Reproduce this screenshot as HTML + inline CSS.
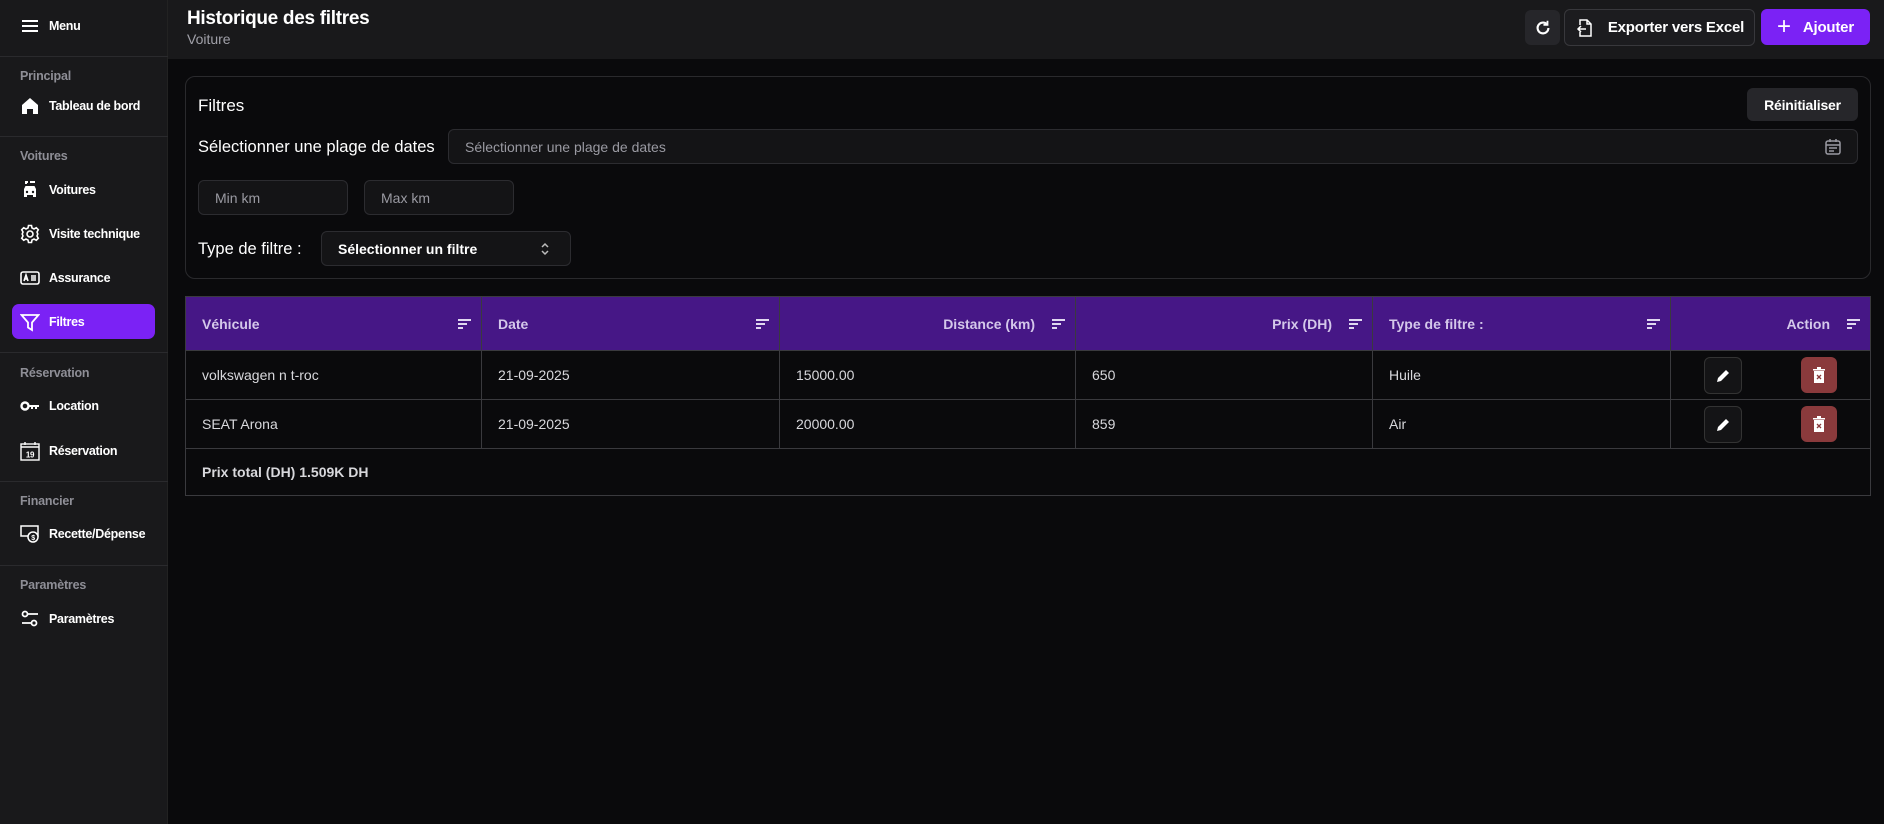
<!DOCTYPE html>
<html><head><meta charset="utf-8"><style>
*{box-sizing:border-box;margin:0;padding:0}
body{width:1884px;height:824px;background:#0a0a0c;font-family:"Liberation Sans",sans-serif;color:#fff;position:relative;overflow:hidden}
.abs{position:absolute}
#side{left:0;top:0;width:168px;height:824px;background:#19191b;border-right:1px solid #222}
.sep{position:absolute;left:0;width:168px;height:1px;background:#2a2a2d}
.sec{position:absolute;left:20px;font-size:12.5px;font-weight:bold;color:#8e8e96;letter-spacing:-0.2px}
.it{position:absolute;left:20px;font-size:12.5px;font-weight:bold;color:#fff;display:flex;align-items:center;height:20px;letter-spacing:-0.3px}
.it svg{width:20px;height:20px;margin-right:9px;flex:none}
#hdr{left:168px;top:0;width:1716px;height:59px;background:#19191b}
.btn{position:absolute;border-radius:6px;display:flex;align-items:center;justify-content:center;font-weight:bold;font-size:15px;letter-spacing:-0.2px}
.inp{position:absolute;background:#141416;border:1px solid #2c2c30;border-radius:6px;font-size:14px;color:#9a9aa2;display:flex;align-items:center;padding-left:16px}
table{position:absolute;left:185px;top:296px;width:1686px;border-collapse:collapse}
td,th{border:1px solid #3a3a3e;font-size:14px;padding:0 16px;position:relative}
th{background:#461786;height:54px;color:#d4c8ea;font-weight:bold;text-align:left}
td{height:49px;color:#d8d8dc}
.r{text-align:right;padding-right:40px}
.so{position:absolute;right:10px;top:22px;width:13px;height:10px}
</style></head><body>
<div id="side" class="abs">
 <div class="it" style="top:16px"><svg viewBox="0 0 20 20"><path d="M2 5h16M2 10h16M2 15h16" stroke="#fff" stroke-width="2"/></svg>Menu</div>
 <div class="sep" style="top:56px"></div>
 <div class="sec" style="top:69px">Principal</div>
 <div class="it" style="top:96px"><svg viewBox="0 0 20 20"><path d="M2 9 10 2l8 7v9h-5v-5H7v5H2z" fill="#fff"/></svg>Tableau de bord</div>
 <div class="sep" style="top:136px"></div>
 <div class="sec" style="top:149px">Voitures</div>
 <div class="it" style="top:180px"><svg viewBox="0 0 20 20"><path d="M5 2h3M6 1v3M10 2h5" stroke="#fff" stroke-width="2"/><path d="M4 9l1.5-3h9L16 9v8h-3v-2H7v2H4z" fill="#fff"/><circle cx="7" cy="12" r="1.2" fill="#19191b"/><circle cx="13" cy="12" r="1.2" fill="#19191b"/></svg>Voitures</div>
 <div class="it" style="top:224px"><svg viewBox="0 0 20 20" fill="none" stroke="#fff" stroke-width="1.6"><circle cx="10" cy="10" r="3"/><path d="M8.5 1.5h3l.5 2.5 2 1 2.3-1.3 2 2L17 8l.8 2-.8 2 1.3 2.3-2 2L14 15l-2 1-.5 2.5h-3L8 16l-2-1-2.3 1.3-2-2L3 12l-.8-2L3 8 1.7 5.7l2-2L6 5l2-1z"/></svg>Visite technique</div>
 <div class="it" style="top:268px"><svg viewBox="0 0 20 20" fill="none" stroke="#fff" stroke-width="1.6"><rect x="1" y="4" width="18" height="12" rx="2"/><path d="M4 13l2-6 2 6M4.7 11h2.6M11 8h5M11 10h5M11 12h5"/></svg>Assurance</div>
 <div class="abs" style="left:12px;top:304px;width:143px;height:35px;background:#7b22f5;border-radius:7px"></div>
 <div class="it" style="top:312px"><svg viewBox="0 0 20 20" fill="none" stroke="#fff" stroke-width="1.8"><path d="M1.5 3h17L12 10.5V18l-4-2.5v-5z"/></svg>Filtres</div>
 <div class="sep" style="top:352px"></div>
 <div class="sec" style="top:366px">Réservation</div>
 <div class="it" style="top:396px"><svg viewBox="0 0 20 20"><circle cx="5" cy="10" r="3.5" fill="none" stroke="#fff" stroke-width="2.4"/><path d="M8 9h11v2h-2v2h-2v-2h-2v2h-2v-2H8z" fill="#fff"/></svg>Location</div>
 <div class="it" style="top:441px"><svg viewBox="0 0 20 20" fill="none" stroke="#fff" stroke-width="1.4"><rect x="1" y="3" width="18" height="16"/><path d="M1 6h18M5 1v3M15 1v3"/><text x="10" y="16.5" font-size="8" fill="#fff" stroke="none" text-anchor="middle" font-family="Liberation Sans">19</text></svg>Réservation</div>
 <div class="sep" style="top:481px"></div>
 <div class="sec" style="top:494px">Financier</div>
 <div class="it" style="top:524px"><svg viewBox="0 0 20 20" fill="none" stroke="#fff" stroke-width="1.5"><rect x="1" y="2" width="17" height="10"/><circle cx="13" cy="13" r="5" fill="#19191b"/><text x="13" y="16" font-size="7" fill="#fff" stroke="none" text-anchor="middle" font-family="Liberation Sans">$</text></svg>Recette/Dépense</div>
 <div class="sep" style="top:565px"></div>
 <div class="sec" style="top:578px">Paramètres</div>
 <div class="it" style="top:609px"><svg viewBox="0 0 20 20" fill="none" stroke="#fff" stroke-width="1.8"><circle cx="5" cy="5" r="2.5"/><path d="M8 5h10M2 14h9"/><circle cx="14" cy="14" r="2.5"/></svg>Paramètres</div>
</div>
<div id="hdr" class="abs">
 <div class="abs" style="left:19px;top:8px;font-size:19px;font-weight:bold;letter-spacing:-0.3px">Historique des filtres</div>
 <div class="abs" style="left:19px;top:31px;font-size:14px;color:#a0a0a8">Voiture</div>
</div>
<div class="btn" style="left:1525px;top:10px;width:35px;height:35px;background:#26262a"><svg width="18" height="18" viewBox="0 0 20 20" fill="none" stroke="#fff" stroke-width="2.4"><path d="M16 10a6 6 0 1 1-2-4.5"/><path d="M15 2v4.5h-4.5" stroke-width="2"/></svg></div>
<div class="btn" style="left:1564px;top:9px;width:191px;height:37px;background:#1c1c1f;border:1px solid #38383c"><svg width="20" height="20" viewBox="0 0 20 20" fill="none" stroke="#fff" stroke-width="1.5" style="margin-right:13px"><path d="M5 7V2h7l4 4v12H5v-4M12 2v4h4M11 11H3m3-3-3 3 3 3"/></svg>Exporter vers Excel</div>
<div class="btn" style="left:1761px;top:9px;width:109px;height:36px;background:#7b22f5"><span style="font-size:24px;font-weight:normal;margin-right:12px;line-height:1">+</span>Ajouter</div>

<div class="abs" style="left:185px;top:76px;width:1686px;height:203px;border:1px solid #2a2a2d;border-radius:10px"></div>
<div class="abs" style="left:198px;top:96px;font-size:17px">Filtres</div>
<div class="btn" style="left:1747px;top:88px;width:111px;height:33px;background:#26262a;font-size:14px">Réinitialiser</div>
<div class="abs" style="left:198px;top:138px;font-size:16.5px">Sélectionner une plage de dates</div>
<div class="inp" style="left:448px;top:129px;width:1410px;height:35px">Sélectionner une plage de dates
 <svg class="abs" style="right:16px;top:8px" width="16" height="18" viewBox="0 0 16 18" fill="none" stroke="#9a9aa2" stroke-width="1.5"><rect x="1" y="3" width="14" height="13" rx="2"/><path d="M1 7h14M5 1v3M11 1v3M4 10h8M4 13h5"/></svg></div>
<div class="inp" style="left:198px;top:180px;width:150px;height:35px">Min km</div>
<div class="inp" style="left:364px;top:180px;width:150px;height:35px">Max km</div>
<div class="abs" style="left:198px;top:240px;font-size:16.5px">Type de filtre :</div>
<div class="inp" style="left:321px;top:231px;width:250px;height:35px;color:#fff;font-weight:bold;font-size:14px">Sélectionner un filtre
 <svg class="abs" style="right:20px;top:10px" width="10" height="14" viewBox="0 0 10 14" fill="none" stroke="#bbb" stroke-width="1.5"><path d="M2 5l3-3 3 3M2 9l3 3 3-3"/></svg></div>

<table>
<tr>
<th style="width:296px">Véhicule<svg class="so" viewBox="0 0 13 10"><path d="M0 1h13M0 5h9M0 9h5" stroke="#e0d8f0" stroke-width="2"/></svg></th>
<th style="width:298px">Date<svg class="so" viewBox="0 0 13 10"><path d="M0 1h13M0 5h9M0 9h5" stroke="#e0d8f0" stroke-width="2"/></svg></th>
<th style="width:296px" class="r">Distance (km)<svg class="so" viewBox="0 0 13 10"><path d="M0 1h13M0 5h9M0 9h5" stroke="#e0d8f0" stroke-width="2"/></svg></th>
<th style="width:297px" class="r">Prix (DH)<svg class="so" viewBox="0 0 13 10"><path d="M0 1h13M0 5h9M0 9h5" stroke="#e0d8f0" stroke-width="2"/></svg></th>
<th style="width:298px">Type de filtre :<svg class="so" viewBox="0 0 13 10"><path d="M0 1h13M0 5h9M0 9h5" stroke="#e0d8f0" stroke-width="2"/></svg></th>
<th class="r">Action<svg class="so" viewBox="0 0 13 10"><path d="M0 1h13M0 5h9M0 9h5" stroke="#e0d8f0" stroke-width="2"/></svg></th>
</tr>
<tr><td>volkswagen n t-roc</td><td>21-09-2025</td><td>15000.00</td><td>650</td><td>Huile</td><td></td></tr>
<tr><td>SEAT Arona</td><td>21-09-2025</td><td>20000.00</td><td>859</td><td>Air</td><td></td></tr>
<tr><td colspan="6" style="height:47px;font-weight:bold">Prix total (DH) 1.509K DH</td></tr>
</table>
<div class="btn" style="left:1704px;top:357px;width:38px;height:37px;background:#141416;border:1px solid #333"><svg width="16" height="16" viewBox="0 0 16 16"><path d="M2 14l1-4 8-8 3 3-8 8z" fill="#fff"/></svg></div>
<div class="btn" style="left:1801px;top:357px;width:36px;height:36px;background:#8a3a3c"><svg width="12" height="16" viewBox="0 0 12 16"><path d="M0 2h12v1.5H0zM4 0h4v2H4zM1 4h10v12H1z" fill="#fff"/><path d="M4 8l4 4M8 8l-4 4" stroke="#8a3a3c" stroke-width="1.3"/></svg></div>
<div class="btn" style="left:1704px;top:406px;width:38px;height:37px;background:#141416;border:1px solid #333"><svg width="16" height="16" viewBox="0 0 16 16"><path d="M2 14l1-4 8-8 3 3-8 8z" fill="#fff"/></svg></div>
<div class="btn" style="left:1801px;top:406px;width:36px;height:36px;background:#8a3a3c"><svg width="12" height="16" viewBox="0 0 12 16"><path d="M0 2h12v1.5H0zM4 0h4v2H4zM1 4h10v12H1z" fill="#fff"/><path d="M4 8l4 4M8 8l-4 4" stroke="#8a3a3c" stroke-width="1.3"/></svg></div>
</body></html>
